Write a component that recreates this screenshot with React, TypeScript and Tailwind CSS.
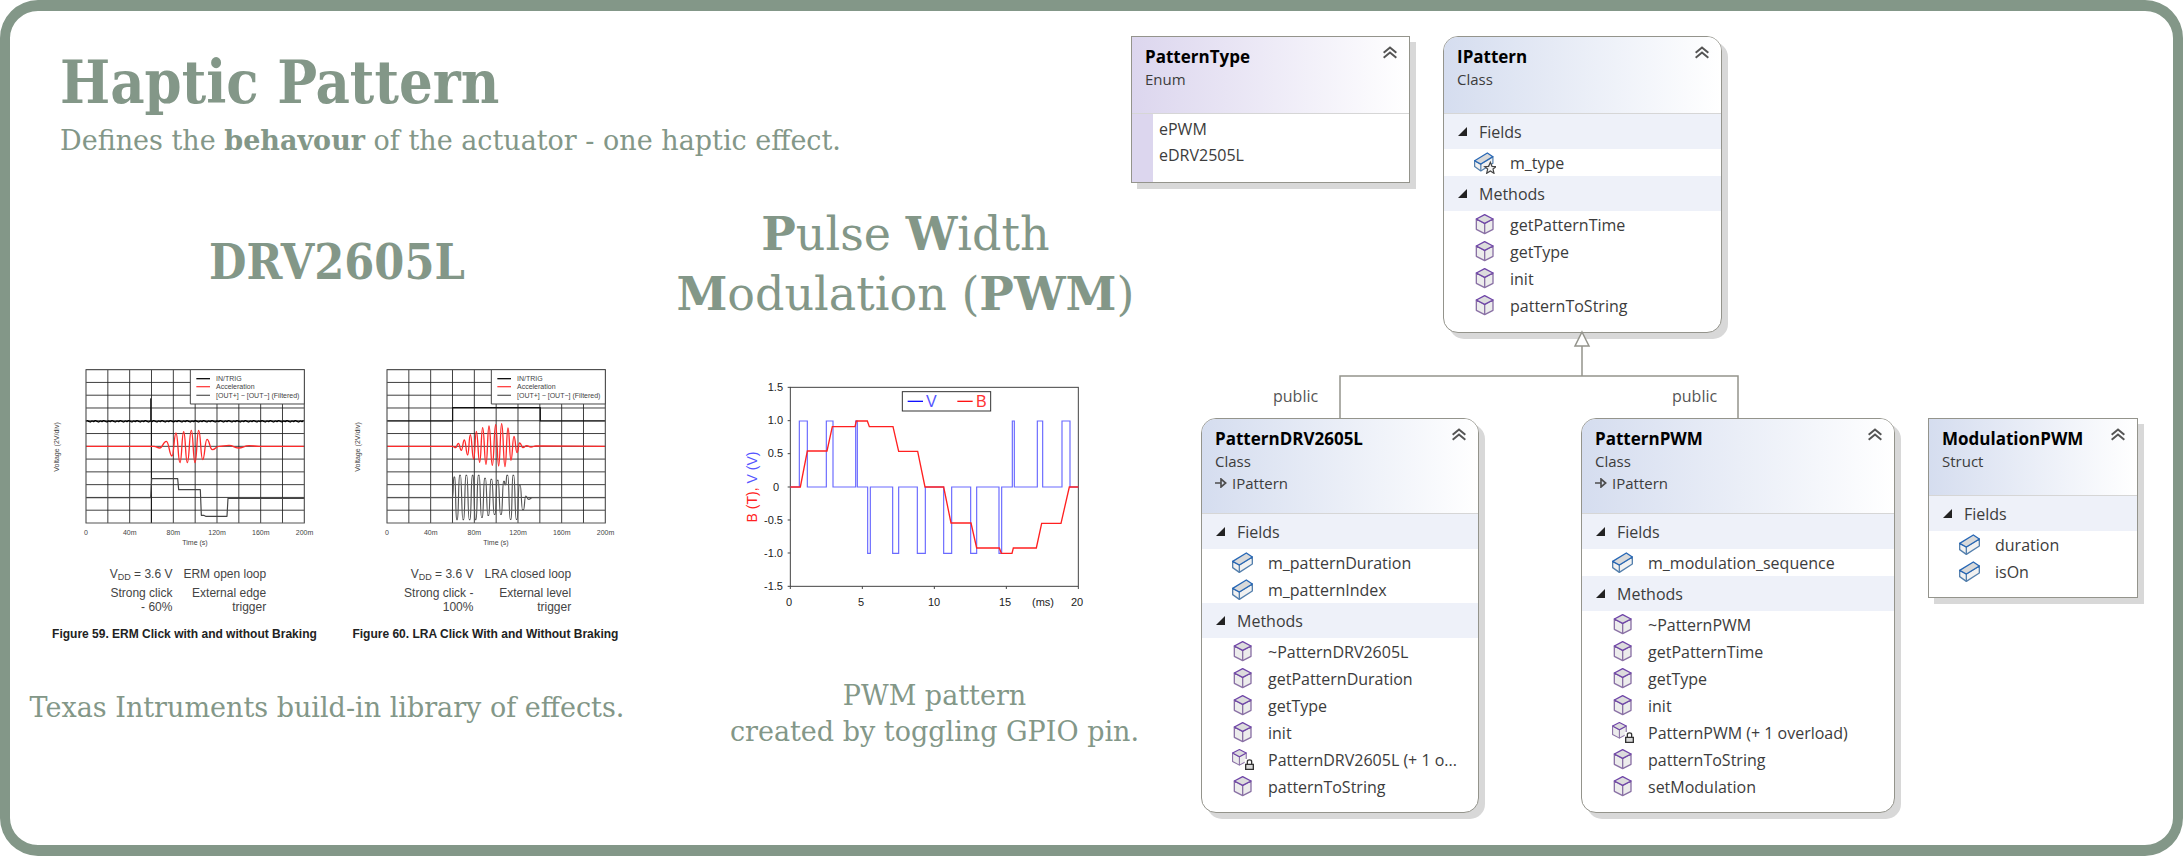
import type { ReactNode } from 'react';

const SLAB = "font-['Rockwell','DejaVu_Serif',serif]";
const SLAB_NARROW = "font-['Rockwell','DejaVu_Serif_Condensed',serif]";
const ARIAL = '"Liberation Sans", Arial, sans-serif';

type Point = [number, number];

/** Joins turning points with curves that are level at each of them. */
function wave(points: Point[]): string {
  return points
    .map(([x, y], i) => {
      if (i === 0) return `M${x} ${y}`;
      const [px, py] = points[i - 1];
      const mid = (px + x) / 2;
      return `C${mid} ${py} ${mid} ${y} ${x} ${y}`;
    })
    .join('');
}

function pulses(list: [number, number, number][]): string {
  return `M181 351${list.map(([a, b, y]) => `H${a}V${y}H${b}V351`).join('')}H1045`;
}

/* ---------- icons ---------- */

type IconKind = 'field' | 'fieldStar' | 'method' | 'methodLock';

function Brick() {
  return (
    <g strokeLinejoin="round" strokeWidth="4">
      <path d="M2 28V47L22 61L61 36V15L22 39Z" fill="#f1f1f1" stroke="#5580ad" />
      <path d="M22 39V61" stroke="#5580ad" />
      <path d="M2 28L43 3L61 15L22 39Z" fill="#d9d9d9" stroke="#2767b5" />
    </g>
  );
}

function Cube() {
  return (
    <g strokeLinejoin="round" strokeWidth="4">
      <path d="M7 15V46L32 59L57 46V15L32 28Z" fill="#ececec" stroke="#8a71a5" />
      <path d="M32 28V59" stroke="#8a71a5" />
      <path d="M7 15L32 2L57 15L32 28Z" fill="#dcdcdc" stroke="#6f45a8" />
    </g>
  );
}

function MemberIcon({ kind }: { kind: IconKind }) {
  return (
    <svg viewBox="0 0 66 66" className="h-[22px] w-[22px] shrink-0" fill="none" aria-hidden="true">
      {kind === 'field' && <Brick />}
      {kind === 'fieldStar' && (
        <>
          <g transform="scale(.93)">
            <Brick />
          </g>
          <path
            d="M49 31L54 43L66 44L57 51L60 64L49 57L38 64L41 51L32 44L44 43Z"
            fill="#f4f4f4"
            stroke="#444"
            strokeWidth="3.5"
          />
        </>
      )}
      {kind === 'method' && <Cube />}
      {kind === 'methodLock' && (
        <>
          <g transform="translate(-4 0) scale(.82)">
            <Cube />
          </g>
          <path d="M38 30H66V62H38Z" fill="#fff" />
          <path d="M41 46H64V61H41Z" fill="#d9d9d9" stroke="#333" strokeWidth="4" />
          <path d="M46 45V38C46 31 59 31 59 38V45" stroke="#333" strokeWidth="4" />
        </>
      )}
    </svg>
  );
}

function CollapseIcon() {
  return (
    <svg viewBox="0 0 42 38" className="h-[13px] w-[14px]" fill="none" stroke="#555" strokeWidth="6" aria-hidden="true">
      <path d="M2 20L21 4L40 20" />
      <path d="M2 35L21 19L40 35" />
    </svg>
  );
}

/* ---------- class diagram ---------- */

interface Group {
  title: string;
  members: [IconKind, string][];
}

interface NodeProps {
  place: string;
  title: string;
  kind: string;
  base?: string;
  square?: boolean;
  tint?: string;
  groups?: Group[];
  children?: ReactNode;
}

function DiagramNode({ place, title, kind, base, square, tint = 'from-[#d5ddef]', groups = [], children }: NodeProps) {
  return (
    <article
      className={`absolute border border-[#94948c] bg-white text-[#3c3c3c] shadow-[6px_6px_0_#d8d8d8] ${square ? '' : 'rounded-[15px]'} ${place}`}
    >
      <header
        className={`relative border-b border-[#d6d6d6] bg-gradient-to-r ${tint} to-white px-[13px] pt-[9px] text-[15px] leading-[22px] ${base ? 'h-[95px]' : 'h-[77px]'} ${square ? '' : 'rounded-t-[14px]'}`}
      >
        <h3 className="text-[17px] font-bold text-black">{title}</h3>
        <p>{kind}</p>
        {base && (
          <p className="flex items-center gap-[5px]">
            <svg viewBox="0 0 36 30" className="h-[10px] w-3" fill="none" stroke="#4d4d4d" strokeWidth="5" aria-hidden="true">
              <path d="M0 15H18M18 3V27L32 15Z" />
            </svg>
            {base}
          </p>
        )}
        <button type="button" aria-label={`Collapse ${title}`} className="absolute top-[9px] right-3">
          <CollapseIcon />
        </button>
      </header>
      {children}
      {groups.map((group) => (
        <section key={group.title}>
          <h4 className="flex h-[35px] items-center gap-3 bg-[#eef1f9] pl-[14px] text-[16px]">
            <svg viewBox="0 0 9 9" className="h-[9px] w-[9px]" aria-hidden="true">
              <path d="M9 0V9H0Z" fill="#222" />
            </svg>
            {group.title}
          </h4>
          <ul className="text-[16px]">
            {group.members.map(([icon, name]) => (
              <li key={name} className="flex h-[27px] items-center gap-[14px] pl-[30px] whitespace-nowrap">
                <MemberIcon kind={icon} />
                {name}
              </li>
            ))}
          </ul>
        </section>
      ))}
    </article>
  );
}

function ClassDiagram() {
  return (
    <section aria-label="Class diagram" className="relative font-['Segoe_UI','Open_Sans',sans-serif]">
      <span className="absolute top-[373px] left-[142px] text-[16px] leading-6 text-[#555]">public</span>
      <span className="absolute top-[373px] left-[541px] text-[16px] leading-6 text-[#555]">public</span>

      <DiagramNode square place="left-0 top-[25px] w-[279px]" title="PatternType" kind="Enum" tint="from-[#dcd6ee]">
        <ul className="border-l-[21px] border-[#dcd6ee] pt-[2px] pb-[14px] pl-[6px] text-[16px] leading-[26px]">
          <li>ePWM</li>
          <li>eDRV2505L</li>
        </ul>
      </DiagramNode>

      <DiagramNode
        place="left-[312px] top-[25px] w-[279px] pb-[13px]"
        title="IPattern"
        kind="Class"
        groups={[
          { title: 'Fields', members: [['fieldStar', 'm_type']] },
          {
            title: 'Methods',
            members: [
              ['method', 'getPatternTime'],
              ['method', 'getType'],
              ['method', 'init'],
              ['method', 'patternToString'],
            ],
          },
        ]}
      />

      <DiagramNode
        place="left-[70px] top-[407px] w-[278px] pb-3"
        title="PatternDRV2605L"
        kind="Class"
        base="IPattern"
        groups={[
          {
            title: 'Fields',
            members: [
              ['field', 'm_patternDuration'],
              ['field', 'm_patternIndex'],
            ],
          },
          {
            title: 'Methods',
            members: [
              ['method', '~PatternDRV2605L'],
              ['method', 'getPatternDuration'],
              ['method', 'getType'],
              ['method', 'init'],
              ['methodLock', 'PatternDRV2605L (+ 1 o...'],
              ['method', 'patternToString'],
            ],
          },
        ]}
      />

      <DiagramNode
        place="left-[450px] top-[407px] w-[314px] pb-3"
        title="PatternPWM"
        kind="Class"
        base="IPattern"
        groups={[
          { title: 'Fields', members: [['field', 'm_modulation_sequence']] },
          {
            title: 'Methods',
            members: [
              ['method', '~PatternPWM'],
              ['method', 'getPatternTime'],
              ['method', 'getType'],
              ['method', 'init'],
              ['methodLock', 'PatternPWM (+ 1 overload)'],
              ['method', 'patternToString'],
              ['method', 'setModulation'],
            ],
          },
        ]}
      />

      <DiagramNode
        square
        place="left-[797px] top-[407px] w-[210px] pb-3"
        title="ModulationPWM"
        kind="Struct"
        groups={[
          {
            title: 'Fields',
            members: [
              ['field', 'duration'],
              ['field', 'isOn'],
            ],
          },
        ]}
      />

      <svg
        className="pointer-events-none absolute top-0 left-0 h-[408px] w-[640px]"
        fill="none"
        stroke="#94948c"
        strokeWidth="1.5"
        aria-hidden="true"
      >
        <path d="M209 407V365H607V407M451 365V335" />
        <path d="M451 321L458 335H444Z" fill="#fff" />
      </svg>
    </section>
  );
}

/* ---------- charts ---------- */

const ERM_ACCELERATION: Point[] = [
  [141, 271], [345, 271], [362, 276], [382, 256], [399, 300], [411, 231], [423, 320], [434, 227], [445, 320], [457, 223],
  [468, 320], [479, 223], [491, 311], [504, 250], [520, 281], [540, 271], [570, 268], [598, 276], [630, 269], [660, 271], [796, 271],
];

const LRA_ACCELERATION: Point[] = [
  [141, 271], [338, 271], [347, 275], [355, 262], [364, 283], [373, 252], [383, 297], [391, 236], [401, 309], [409, 226],
  [419, 319], [428, 215], [438, 325], [447, 210], [457, 328], [467, 206], [476, 330], [485, 203], [495, 332], [504, 216],
  [513, 313], [522, 241], [531, 290], [539, 261], [549, 275], [560, 269], [573, 273], [588, 270], [796, 271],
];

const LRA_TURNS: Point[] = [
  [343, 363], [351, 491], [360, 358], [370, 491], [379, 358], [389, 491], [398, 358], [407, 491], [416, 358], [426, 484],
  [435, 367], [445, 478], [454, 370], [464, 475], [473, 373], [483, 475], [492, 376], [496, 386], [502, 358], [512, 490],
  [520, 358], [530, 490], [539, 387], [549, 461],
];

const LRA_OUTPUT: Point[] = [
  [141, 425],
  [338, 425],
  ...LRA_TURNS.flatMap(([x, y]): Point[] => [
    [x - 1.5, y],
    [x + 1.5, y],
  ]),
  [557, 420],
  [566, 430],
  [577, 425],
  [796, 425],
];

const NOISE = `M141 196${Array.from({ length: 131 }, (_, i) => `L${144 + i * 5} ${196 + ((i * 7) % 5) - 2}`).join('')}`;

function ScopeChart({ label, children }: { label: string; children: ReactNode }) {
  return (
    <svg viewBox="0 0 290 195" className="h-[195px] w-[290px]" role="img" aria-label={label} fontFamily={ARIAL} fill="#444">
      <g transform="scale(.33333)" fill="none" strokeLinejoin="round">
        <g stroke="#222" strokeWidth="2.6">
          {Array.from({ length: 9 }, (_, i) => (
            <path key={i} d={`M${206.5 + i * 65.5} 41V501`} />
          ))}
          {Array.from({ length: 11 }, (_, i) => (
            <path key={i} d={`M141 ${79.3 + i * 38.33}H796`} />
          ))}
        </g>
        {children}
        <rect x="141" y="41" width="655" height="460" stroke="#555" strokeWidth="3.5" />
        <rect x="454" y="41" width="342" height="103" fill="#fff" stroke="#444" strokeWidth="3" />
        <g strokeWidth="4">
          <path d="M472 68H513" stroke="#111" />
          <path d="M472 92H513" stroke="#f44" />
          <path d="M472 118H513" stroke="#666" />
        </g>
      </g>
      <g fontSize="7">
        <text x="177" y="25">IN/TRIG</text>
        <text x="177" y="33">Acceleration</text>
        <text x="177" y="42">[OUT+] − [OUT−] (Filtered)</text>
      </g>
      <g fontSize="7" textAnchor="middle">
        {['0', '40m', '80m', '120m', '160m', '200m'].map((t, i) => (
          <text key={t} x={47 + i * 43.7} y="179">
            {t}
          </text>
        ))}
        <text x="156" y="189">Time (s)</text>
        <text transform="translate(20 91) rotate(-90)">Voltage (2V/div)</text>
      </g>
    </svg>
  );
}

function Figure({ chart, loop, click, trigger, caption }: { chart: ReactNode; loop: string; click: ReactNode; trigger: ReactNode; caption: string }) {
  return (
    <figure className="font-['Liberation_Sans',Arial,sans-serif]">
      {chart}
      <div className="mt-4 grid grid-cols-[133px_max-content] gap-x-[11px] gap-y-[5px] text-right text-[12px] leading-[14px] text-[#444]">
        <p>
          V<sub className="text-[9px]">DD</sub> = 3.6 V
        </p>
        <p>{loop}</p>
        <p>{click}</p>
        <p>{trigger}</p>
      </div>
      <figcaption className="mt-3 text-center text-[12px] leading-[16px] font-bold text-[#222]">{caption}</figcaption>
    </figure>
  );
}

const VOLTAGE = pulses([
  [208, 232, 153], [289, 309, 153], [377, 382, 153], [413, 421, 550], [488, 506, 550], [562, 586, 550], [641, 665, 550],
  [722, 740, 550], [807, 815, 550], [847, 853, 153], [922, 938, 153], [996, 1020, 153],
]);

const FLUX =
  'M181 351H211L232 243H291L307 170H375L379 153H412L418 170H489L506 244H563L585 351H641L663 459H723L740 534H808L814 550H846L850 534H919L935 460H993L1018 351H1045';

function PwmChart() {
  return (
    <svg viewBox="0 0 370 240" className="h-[240px] w-[370px]" role="img" aria-label="Pulse width modulation over 20 ms" fontFamily={ARIAL} fill="#222">
      <g transform="scale(.33333)" fill="none">
        <rect x="181" y="52" width="864" height="597" stroke="#444" strokeWidth="3" />
        <path
          d="M173 52H181M173 152H181M173 251H181M173 351H181M173 450H181M173 549H181M173 649H181M181 649V657M397 649V657M613 649V657M829 649V657M1045 649V657"
          stroke="#444"
          strokeWidth="3"
        />
        <path d={VOLTAGE} stroke="#6a6aff" strokeWidth="3.5" />
        <path d={FLUX} stroke="#ff2020" strokeWidth="4" />
        <rect x="517" y="65" width="265" height="58" fill="#fff" stroke="#333" strokeWidth="3" />
        <path d="M533 94H579" stroke="#11f" strokeWidth="4" />
        <path d="M682 94H728" stroke="#f11" strokeWidth="4" />
      </g>
      <g fontSize="11" textAnchor="end">
        {['1.5', '1.0', '0.5', '0', '-0.5', '-1.0', '-1.5'].map((t, i) => (
          <text key={t} x={t === '0' ? 49 : 53} y={21 + i * 33.2}>
            {t}
          </text>
        ))}
      </g>
      <g fontSize="11" textAnchor="middle">
        <text x="59" y="236">0</text>
        <text x="131" y="236">5</text>
        <text x="204" y="236">10</text>
        <text x="275" y="236">15</text>
        <text x="313" y="236">(ms)</text>
        <text x="347" y="236">20</text>
      </g>
      <g fontSize="16">
        <text x="196" y="37" fill="#55f">V</text>
        <text x="246" y="37" fill="#f33">B</text>
      </g>
      <text transform="translate(27 117) rotate(-90)" fontSize="14" textAnchor="middle" fill="#f22">
        B (T), <tspan fill="#55f">V (V)</tspan>
      </text>
    </svg>
  );
}

/* ---------- page ---------- */

export default function App() {
  return (
    <main className="grid min-h-screen grid-cols-[1121fr_1042fr] rounded-[38px] border-x-[10px] border-y-[11px] border-[#839788] bg-white">
      <div className={`text-[#839788] ${SLAB}`}>
        <header className="pt-9 pl-[50px]">
          <h1 className={`text-[59px] leading-[72px] font-bold whitespace-nowrap ${SLAB_NARROW}`}>Haptic Pattern</h1>
          <p className="mt-1 text-[27px] leading-9 whitespace-nowrap">
            Defines the <b>behavour</b> of the actuator - one haptic effect.
          </p>
        </header>

        <div className="mt-[45px] grid grid-cols-[minmax(0,7fr)_minmax(0,5fr)]">
          <h2 className={`self-center pb-1 text-center text-[48px] leading-[60px] font-bold ${SLAB_NARROW}`}>DRV2605L</h2>
          <h2 className="flex flex-col items-center pl-4 text-[46px] leading-[60px] whitespace-nowrap">
            <span>
              <b>P</b>ulse <b>W</b>idth
            </span>
            <span>
              <b>M</b>odulation (<b>PWM</b>)
            </span>
          </h2>

          <div className="mt-8 flex justify-center gap-[11px] pr-1">
            <Figure
              loop="ERM open loop"
              click={<>Strong click<br />- 60%</>}
              trigger={<>External edge<br />trigger</>}
              caption="Figure 59. ERM Click with and without Braking"
              chart={
                <ScopeChart label="ERM click with and without braking">
                  <path d={NOISE} stroke="#000" strokeWidth="4" />
                  <path d="M335 196V127M337 196V501" stroke="#111" strokeWidth="3" />
                  <path d={wave(ERM_ACCELERATION)} stroke="#ff2a2a" strokeWidth="4" />
                  <path d="M141 425H335L338 368H416L419 401H484L487 478H494L500 481H564L567 427H796" stroke="#444" strokeWidth="3.5" />
                </ScopeChart>
              }
            />
            <Figure
              loop="LRA closed loop"
              click={<>Strong click -<br />100%</>}
              trigger={<>External level<br />trigger</>}
              caption="Figure 60. LRA Click With and Without Braking"
              chart={
                <ScopeChart label="LRA click with and without braking">
                  <path d="M141 195H338V155H601V195H796" stroke="#111" strokeWidth="3.5" />
                  <path d={wave(LRA_ACCELERATION)} stroke="#ff2a2a" strokeWidth="4" />
                  <path d={wave(LRA_OUTPUT)} stroke="#555" strokeWidth="3.5" />
                </ScopeChart>
              }
            />
          </div>
          <div className="mt-[46px] pl-[66px]">
            <PwmChart />
          </div>

          <p className="mt-9 self-center pr-5 pb-3 text-center text-[27px] leading-9 whitespace-nowrap">
            Texas Intruments build-in library of effects.
          </p>
          <p className="mt-9 w-max pl-[66px] text-center text-[27px] leading-9">
            PWM pattern
            <br />
            created by toggling GPIO pin.
          </p>
        </div>
      </div>

      <ClassDiagram />
    </main>
  );
}
